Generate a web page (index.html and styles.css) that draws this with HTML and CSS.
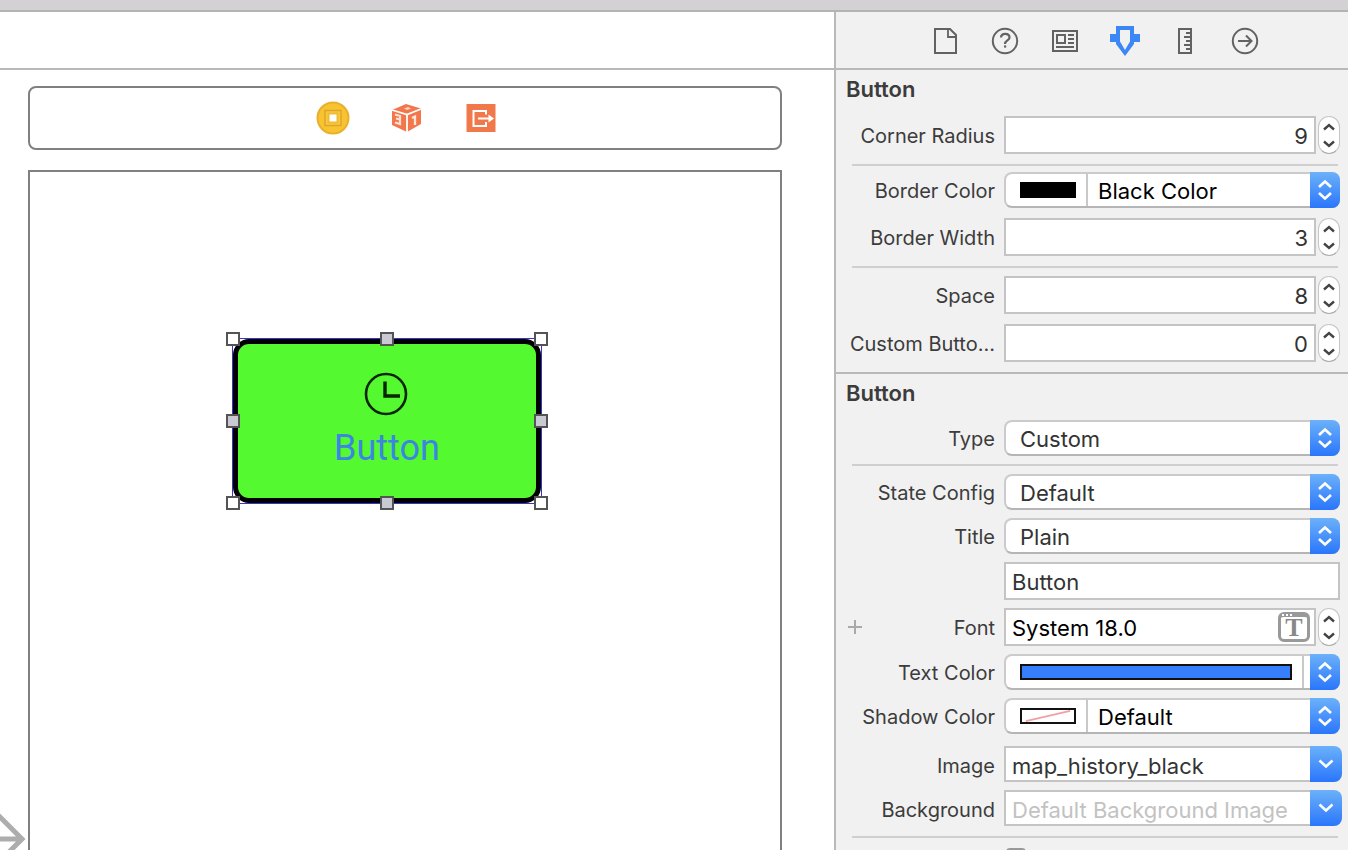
FILE: index.html
```html
<!DOCTYPE html>
<html lang="en">
<head>
<meta charset="utf-8">
<title>Attributes Inspector</title>
<link rel="stylesheet" href="styles.css">
</head>
<body>
<svg class="defs" aria-hidden="true">
  <symbol id="updown" viewBox="0 0 30 36"><path d="M9 15L15 9.500L21 15M9 21L15 26.500L21 21" fill="none" stroke="#fff" stroke-width="2.600"/></symbol>
  <symbol id="down" viewBox="0 0 32 36"><path d="M9.500 14.500L16 20.500L22.500 14.500" fill="none" stroke="#fff" stroke-width="2.600"/></symbol>
  <symbol id="chev-up" viewBox="0 0 20 18"><path d="M5 12.500L10 8L15 12.500" fill="none" stroke="#444" stroke-width="2.400"/></symbol>
  <symbol id="chev-down" viewBox="0 0 20 18"><path d="M5 6.500L10 11L15 6.500" fill="none" stroke="#444" stroke-width="2.400"/></symbol>
</svg>
<div class="titlebar"></div>
<div class="app">
  <main class="editor">
    <div class="jumpbar"></div>
    <div class="workspace">
      <div class="dock">
        <svg width="34" height="34" viewBox="0 0 34 34"><circle cx="17" cy="17" r="15.500" fill="#f7c331" stroke="#e9b02c" stroke-width="2"/><rect x="9" y="9.500" width="16" height="15" fill="#f9ca3c" stroke="#dda52b" stroke-width="1.500"/><rect x="12.500" y="12.500" width="9" height="9" fill="#fff" stroke="#efbb35" stroke-width="2"/></svg>
        <svg width="34" height="34" viewBox="0 0 34 34"><path d="M16 3L31 7.500V23L17 31L2 24V9Z" fill="#f2784c"/><path d="M2 9L17 13.500L31 8M17 13.500V31" fill="none" stroke="#fff" stroke-width="1.800"/><path d="M14 7.500L18 6L21 7.500L17 9Z" fill="#fbd3c3"/><path d="M5 13.500L10 15V18.500L6 17.500M10 18.500V23L5 21.500" fill="none" stroke="#fbe0d6" stroke-width="2.200"/><path d="M22 17L25 15.500V24" fill="none" stroke="#fde5dc" stroke-width="2.300"/></svg>
        <svg width="34" height="34" viewBox="0 0 34 34"><rect x="2.500" y="3" width="29" height="28" fill="#f1784b"/><path d="M22 13.500V10H9.500V25H22V21M14 17.500H27" fill="none" stroke="#fff" stroke-width="2"/><path d="M24.500 13.500L30 17.500L24.500 21.500Z" fill="#fff"/></svg>
      </div>
      <div class="canvas">
        <div class="selection">
          <button class="stage-button" type="button">
            <svg width="44" height="44" viewBox="0 0 44 44" fill="none" stroke="#062500"><circle cx="21" cy="21" r="20" stroke-width="2.600"/><path d="M20 8.500V23H35" stroke-width="3.400"/></svg>
            <span>Button</span>
          </button>
          <i class="handle n w"></i><i class="handle mid n c"></i><i class="handle n e"></i>
          <i class="handle mid m w"></i><i class="handle mid m e"></i>
          <i class="handle s w"></i><i class="handle mid s c"></i><i class="handle s e"></i>
        </div>
      </div>
      <svg class="entry" width="28" height="60" viewBox="0 0 28 60" fill="none" stroke="#adadad" stroke-width="5"><path d="M0 30H20M-3 5L22 30L-3 55"/></svg>
    </div>
  </main>
  <aside class="inspector">
    <nav class="tabs">
      <button type="button" aria-label="File inspector"><svg width="32" height="32" viewBox="0 0 32 32" fill="none" stroke="#626262" stroke-width="2"><path d="M6 4H21L27 10V28H6Z"/><path d="M19 4V12H27" stroke-width="1.800"/></svg></button>
      <button type="button" aria-label="Quick help"><svg width="32" height="32" viewBox="0 0 32 32" fill="none" stroke="#626262" stroke-width="2"><circle cx="16" cy="16" r="12.200"/><path d="M12 12.500C12 7.500 20.500 8 20.500 12.500C20.500 15.500 16 15.500 16 19" stroke-width="2.200"/><path d="M15 21.500H17.200" stroke-width="2.200"/></svg></button>
      <button type="button" aria-label="Identity inspector"><svg width="32" height="32" viewBox="0 0 32 32" fill="none" stroke="#626262" stroke-width="2"><rect x="4" y="6" width="24" height="20"/><rect x="8" y="10" width="8" height="8"/><path d="M19 10H25M19 14H25M19 18H25M7 22H25"/></svg></button>
      <button type="button" aria-label="Attributes inspector"><svg width="32" height="32" viewBox="0 0 32 32"><path fill="#3b87f5" fill-rule="evenodd" d="M7 1H25V9H31V17H25V19L16 31L7 19V17H1V9H7ZM11 5V16.500L16 25L21 16.500V5Z"/></svg></button>
      <button type="button" aria-label="Size inspector"><svg width="32" height="32" viewBox="0 0 32 32" fill="none" stroke="#626262" stroke-width="2"><rect x="10" y="4" width="12" height="24"/><path d="M17 8H22M15 12H22M17 16H22M15 20H22M17 24H22"/></svg></button>
      <button type="button" aria-label="Connections inspector"><svg width="32" height="32" viewBox="0 0 32 32" fill="none" stroke="#626262" stroke-width="2"><circle cx="16" cy="16" r="12.200"/><path d="M9 16H22M17 10.500L22.500 16L17 21.500"/></svg></button>
    </nav>

    <section class="section">
      <h2>Button</h2>
      <div class="row"><label for="radius">Corner Radius</label>
        <div class="stepped"><input class="field num" id="radius" value="9"><div class="stepper"><button type="button" aria-label="Increase"><svg><use href="#chev-up"/></svg></button><button type="button" aria-label="Decrease"><svg><use href="#chev-down"/></svg></button></div></div></div>
      <hr class="tight">
      <div class="row"><label for="bcolor">Border Color</label>
        <div class="popup"><span class="well"><i class="swatch black"></i></span><select class="strong" id="bcolor"><option>Black Color</option></select><svg class="cap"><use href="#updown"/></svg></div></div>
      <div class="row wide"><label for="bwidth">Border Width</label>
        <div class="stepped"><input class="field num" id="bwidth" value="3"><div class="stepper"><button type="button" aria-label="Increase"><svg><use href="#chev-up"/></svg></button><button type="button" aria-label="Decrease"><svg><use href="#chev-down"/></svg></button></div></div></div>
      <hr>
      <div class="row"><label for="space">Space</label>
        <div class="stepped"><input class="field num" id="space" value="8"><div class="stepper"><button type="button" aria-label="Increase"><svg><use href="#chev-up"/></svg></button><button type="button" aria-label="Decrease"><svg><use href="#chev-down"/></svg></button></div></div></div>
      <div class="row wide"><label for="custom">Custom Butto...</label>
        <div class="stepped"><input class="field num" id="custom" value="0"><div class="stepper"><button type="button" aria-label="Increase"><svg><use href="#chev-up"/></svg></button><button type="button" aria-label="Decrease"><svg><use href="#chev-down"/></svg></button></div></div></div>
    </section>

    <section class="section">
      <h2>Button</h2>
      <div class="row"><label for="type">Type</label>
        <div class="popup"><select id="type"><option>Custom</option></select><svg class="cap"><use href="#updown"/></svg></div></div>
      <hr class="close">
      <div class="row"><label for="state">State Config</label>
        <div class="popup"><select id="state"><option>Default</option></select><svg class="cap"><use href="#updown"/></svg></div></div>
      <div class="row near"><label for="title">Title</label>
        <div class="popup"><select id="title"><option>Plain</option></select><svg class="cap"><use href="#updown"/></svg></div></div>
      <div class="row near"><span></span><input class="field" aria-label="Title text" value="Button"></div>
      <div class="row near"><div class="label-line"><button class="add" type="button" aria-label="Add font variation"><svg width="14" height="14" viewBox="0 0 14 14"><path d="M7 0V14M0 7H14" stroke="#a9a9a9" stroke-width="2"/></svg></button><label for="font">Font</label></div>
        <div class="stepped"><div class="field font"><input class="strong" id="font" value="System 18.0"><button type="button" aria-label="Choose font"><span>T</span></button></div><div class="stepper"><button type="button" aria-label="Increase"><svg><use href="#chev-up"/></svg></button><button type="button" aria-label="Decrease"><svg><use href="#chev-down"/></svg></button></div></div></div>
      <div class="row near"><label for="tcolor">Text Color</label>
        <div class="popup"><span class="well full"><i class="swatch blue"></i></span><select class="blank" id="tcolor"><option></option></select><svg class="cap"><use href="#updown"/></svg></div></div>
      <div class="row near"><label for="shadow">Shadow Color</label>
        <div class="popup"><span class="well"><svg class="swatch none" viewBox="0 0 54 14" preserveAspectRatio="none"><path d="M4 13L50 1" stroke="#f3a0a5" stroke-width="2"/></svg></span><select class="strong" id="shadow"><option>Default</option></select><svg class="cap"><use href="#updown"/></svg></div></div>
      <div class="row combo-row far"><label for="image">Image</label>
        <div class="combo"><input class="field" id="image" value="map_history_black"><button class="cap" type="button" aria-label="Show images"><svg><use href="#down"/></svg></button></div></div>
      <div class="row combo-row near"><label for="bg">Background</label>
        <div class="combo"><input class="field" id="bg" placeholder="Default Background Image"><button class="cap" type="button" aria-label="Show backgrounds"><svg><use href="#down"/></svg></button></div></div>
      <hr>
      <div class="row wide"><span></span><input class="tick" type="checkbox" aria-label="Option"></div>
    </section>
  </aside>
</div>
</body>
</html>
```

FILE: styles.css
```css
* { box-sizing: border-box; }

body {
  margin: 0;
  height: 100vh;
  display: flex;
  flex-direction: column;
  overflow: hidden;
  background: #fff;
  color: #3c3c3c;
  font: 20px/28px Inter, "Liberation Sans", sans-serif;
}

button, input, select {
  appearance: none;
  margin: 0;
  padding: 0;
  border: 0;
  border-radius: 0;
  background: none;
  color: inherit;
  font: inherit;
  outline: 0;
}

.defs { position: absolute; width: 0; height: 0; }

.titlebar {
  flex: none;
  height: 12px;
  background: #d4d1d5;
  border-bottom: 2px solid #b3b3b3;
}

.app { flex: 1; min-height: 0; display: flex; }

/* Editor */
.editor { flex: 1; min-width: 0; display: flex; flex-direction: column; }
.jumpbar { flex: none; height: 58px; border-bottom: 2px solid #b9b9b9; }

.workspace {
  position: relative;
  flex: 1;
  min-height: 0;
  display: flex;
  flex-direction: column;
  gap: 20px;
  padding: 16px 52px 0 28px;
}

.dock {
  display: flex;
  align-items: center;
  justify-content: center;
  gap: 40px;
  height: 64px;
  padding-left: 4px;
  border: 2px solid #808080;
  border-radius: 8px;
}

.canvas {
  position: relative;
  flex: 1;
  border: 2px solid #808080;
  border-bottom: 0;
}

.selection {
  position: absolute;
  left: 202px;
  top: 166px;
  width: 310px;
  height: 166px;
  border: 1px solid #3a35c8;
}

.stage-button {
  width: 100%;
  height: 100%;
  display: flex;
  flex-direction: column;
  align-items: center;
  justify-content: center;
  gap: 10px;
  border: 5px solid #000;
  border-radius: 16px;
  background: #54f92f;
  color: #3b85e3;
  font: 36px/42px Roboto, "Liberation Sans", sans-serif;
}
.stage-button svg { overflow: visible; }

.handle {
  position: absolute;
  width: 14px;
  height: 14px;
  border: 2px solid #545454;
  background: #fff;
}
.handle.mid { background: #c9c9d4; }
.handle.n { top: -7px; }
.handle.m { top: 75px; }
.handle.s { bottom: -7px; }
.handle.w { left: -7px; }
.handle.c { left: 147px; }
.handle.e { right: -7px; }

.entry { position: absolute; left: 0; top: 739px; }

/* Inspector */
.inspector {
  flex: none;
  width: 514px;
  overflow: hidden;
  border-left: 2px solid #b9b9b9;
  background: #f1f1f1;
}

.tabs {
  display: flex;
  align-items: center;
  justify-content: center;
  gap: 28px;
  height: 58px;
  padding: 2px 0 0 6px;
  border-bottom: 2px solid #b9b9b9;
}
.tabs button, .tabs svg { display: block; width: 32px; height: 32px; }

.section { padding: 5px 8px 10px 0; border-bottom: 2px solid #b9b9b9; }
.section + .section { border-bottom: 0; }

h2 {
  margin: 0 0 13px;
  padding-left: 10px;
  font-size: 22px;
  line-height: 28px;
  font-weight: 600;
}

hr {
  height: 2px;
  margin: 10px 2px 8px 16px;
  border: 0;
  background: #cfcfcf;
}
hr.tight { margin-bottom: 6px; }
hr.close { margin-top: 8px; }

.row {
  display: grid;
  grid-template-columns: 159px minmax(0, 1fr);
  column-gap: 9px;
  align-items: center;
}
.row.near { margin-top: 8px; }
.row.wide { margin-top: 10px; }
.row.far { margin-top: 12px; }
.row.combo-row { margin-right: -2px; }
.row label { text-align: right; white-space: nowrap; padding-top: 2px; }
.label-line { display: flex; justify-content: space-between; align-items: center; padding-left: 12px; }
.add svg { display: block; }

.field {
  width: 100%;
  min-width: 0;
  height: 38px;
  padding: 2px 6px 0;
  border: 2px solid #c4c4c4;
  background: #fff;
  color: #333;
}
.field, .popup { font-size: 22px; }
.num { text-align: right; }
.strong { color: #000; }

.stepped { display: flex; gap: 2px; }
.stepper {
  flex: none;
  width: 22px;
  height: 38px;
  border: 1px solid #c6c6c6;
  border-bottom-color: #aaa;
  border-radius: 11px;
  background: #fff;
}
.stepper button, .stepper svg { display: block; width: 20px; height: 18px; }

.popup {
  position: relative;
  display: flex;
  height: 36px;
  border: 2px solid #cbcbcb;
  border-bottom-color: #b5b5b5;
  border-radius: 8px;
  background: #fff;
}
.popup select { flex: 1; min-width: 0; padding: 2px 0 0 14px; color: #333; }
.popup select.strong { padding-left: 10px; color: #000; }
.popup select.blank { flex: none; width: 34px; padding: 0; }

.well {
  flex: none;
  width: 82px;
  display: flex;
  align-items: center;
  padding: 0 10px 0 14px;
  border-right: 2px solid #c8c8c8;
}
.well.full { flex: 1; width: auto; }
.swatch { display: block; width: 100%; height: 16px; border: 2px solid #111; }
.swatch.black { background: #000; border-color: #000; }
.swatch.blue { background: #377ffa; }
.swatch.none { background: #fff; }

.cap {
  display: block;
  width: 30px;
  height: 36px;
  border-radius: 0 8px 8px 0;
  background: linear-gradient(#6cb1fa, #2a76fb);
}
.popup .cap { position: absolute; right: -2px; top: -2px; }

.combo { display: flex; }
.combo .field { flex: 1; height: 36px; padding-top: 4px; border-right: 0; }
.combo .cap { flex: none; width: 32px; }
.combo svg { display: block; width: 32px; height: 36px; }
.combo-row label { padding-top: 4px; }
::placeholder { color: #c2c2c2; opacity: 1; }

.field.font { display: flex; align-items: center; padding: 0 4px 0 6px; }
.font input { flex: 1; min-width: 0; padding-top: 2px; }
.font button {
  position: relative;
  flex: none;
  width: 32px;
  height: 30px;
  border: 3px solid #999;
  border-top-width: 5px;
  border-radius: 6px;
  color: #888;
  font: bold 26px/22px "Liberation Serif", serif;
}
.font button::before {
  content: "";
  position: absolute;
  left: 1px;
  top: -3px;
  width: 10px;
  height: 2px;
  background: repeating-linear-gradient(90deg, #fff 0 2px, #999 2px 4px);
}
.font button span { display: block; }

.tick {
  width: 20px;
  height: 20px;
  margin-left: 2px;
  border: 2px solid #999;
  border-radius: 4px;
  background: #fff;
}
```
